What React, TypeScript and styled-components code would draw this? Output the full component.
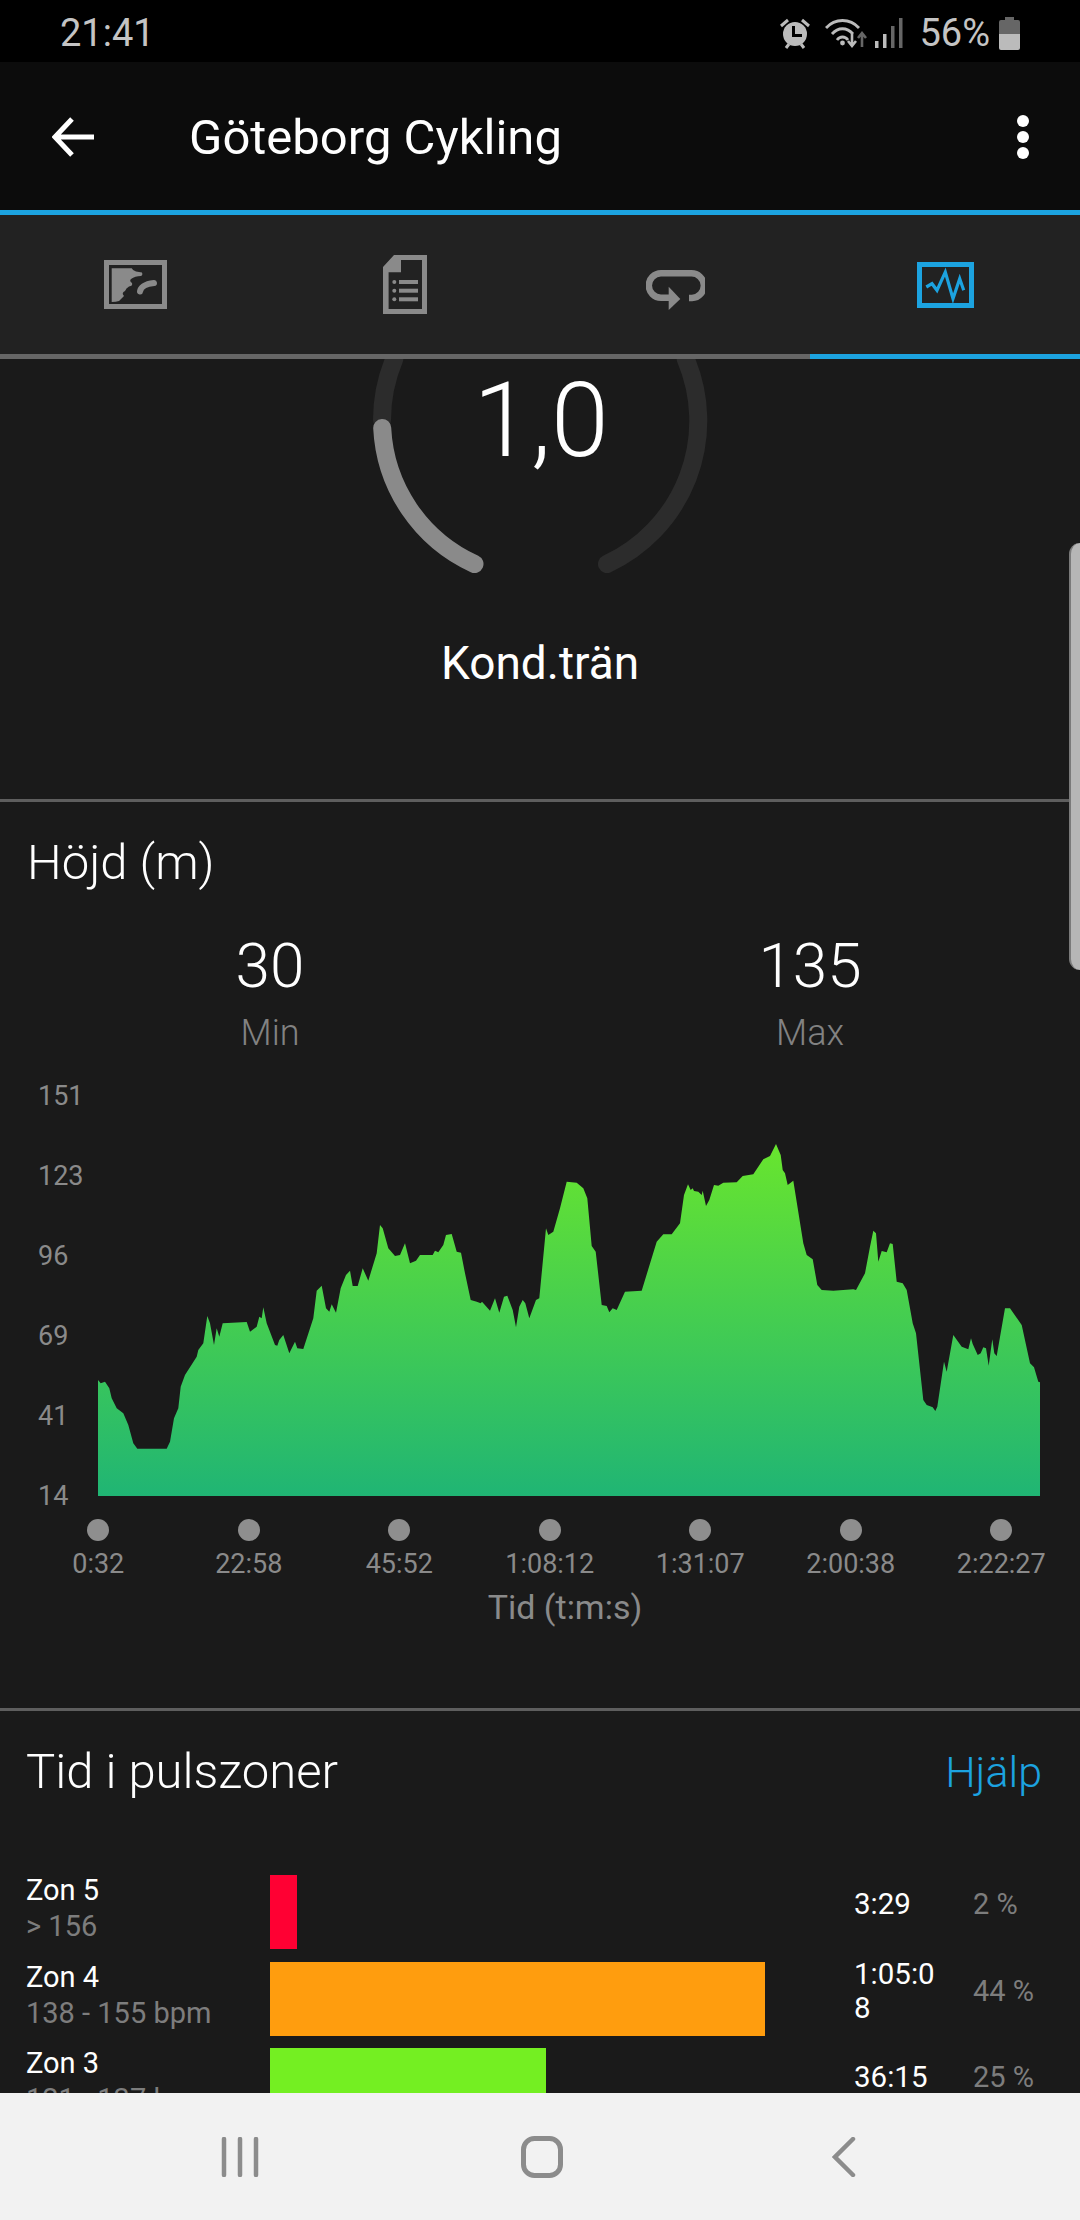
import styled, { createGlobalStyle } from "styled-components";

const GlobalStyle = createGlobalStyle`
  html, body {
    margin: 0;
    padding: 0;
    background: #000;
  }
  * {
    box-sizing: border-box;
  }
`;

const Screen = styled.div`
  position: relative;
  width: 1080px;
  height: 2220px;
  display: flex;
  flex-direction: column;
  overflow: hidden;
  background: #1a1a1a;
  color: #fff;
  font-family: Roboto, "Liberation Sans", sans-serif;
`;

const StatusBar = styled.div`
  flex: 0 0 62px;
  display: flex;
  align-items: center;
  justify-content: space-between;
  padding: 4px 60px 0;
  background: #000;
  color: #c4c4c4;
  font-size: 38px;
`;

const StatusIcons = styled.div`
  display: flex;
  align-items: center;
`;

const StatusPercent = styled.span`
  margin: 0 9px 0 16px;
  font-size: 38px;
`;

const Header = styled.header`
  flex: 0 0 153px;
  display: flex;
  align-items: center;
  padding: 2px 51px 0 52px;
  background: #0c0c0c;
  border-bottom: 5px solid #1ca3e0;
`;

const HeaderTitle = styled.h1`
  flex: 1;
  margin: 0 0 0 95px;
  font-size: 49px;
  font-weight: 400;
`;

const Tabs = styled.nav`
  flex: 0 0 144px;
  display: grid;
  grid-template-columns: repeat(4, 1fr);
  background: #222;
`;

const Tab = styled.div<{ $active?: boolean }>`
  display: flex;
  align-items: center;
  justify-content: center;
  border-bottom: 5px solid ${(p) => (p.$active ? "#1ca3e0" : "#666")};
`;

const Content = styled.main`
  flex: 1;
  min-height: 0;
  overflow: hidden;
`;

const Section = styled.section`
  border-bottom: 3px solid #5e5e5e;
`;

const GaugeSection = styled(Section)`
  height: 443px;
  display: flex;
  flex-direction: column;
  align-items: center;
`;

const Dial = styled.div`
  position: relative;
  width: 360px;
  height: 230px;
`;

const DialValue = styled.div`
  position: absolute;
  left: 2px;
  right: 0;
  top: 0;
  text-align: center;
  font-size: 104px;
  line-height: 124px;
  font-weight: 300;
`;

const GaugeLabel = styled.div`
  margin-top: 44px;
  font-size: 46px;
  line-height: 60px;
`;

const ElevationSection = styled(Section)`
  padding-top: 31px;
  padding-bottom: 79px;
`;

const SectionTitle = styled.h2`
  margin: 0;
  font-size: 49px;
  line-height: 60px;
  font-weight: 300;
`;

const ElevationTitle = styled(SectionTitle)`
  padding-left: 27px;
`;

const Stats = styled.div`
  display: grid;
  grid-template-columns: 1fr 1fr;
  margin-top: 37px;
  text-align: center;
`;

const StatValue = styled.div`
  font-size: 62px;
  line-height: 72px;
  font-weight: 300;
`;

const StatLabel = styled.div`
  margin-top: 9px;
  color: #828282;
  font-size: 36px;
  line-height: 44px;
  font-weight: 300;
`;

const ChartRow = styled.div`
  display: flex;
  align-items: flex-end;
  height: 432px;
  margin-top: 25px;
`;

const YAxis = styled.div`
  width: 98px;
  height: 100%;
  display: flex;
  flex-direction: column;
  justify-content: space-between;
  padding-left: 38px;
  color: #8a8a8a;
  font-size: 27px;
  line-height: 32px;
`;

const AreaChart = styled.svg`
  display: block;
  margin-bottom: 16px;
`;

const XAxis = styled.div`
  display: grid;
  grid-template-columns: repeat(7, 150.5px);
  margin: 7px 0 0 23px;
`;

const Tick = styled.div`
  display: flex;
  flex-direction: column;
  align-items: center;
  gap: 7px;
  color: #8a8a8a;
  font-size: 27px;
  line-height: 32px;
  white-space: nowrap;
`;

const TickDot = styled.span`
  width: 22px;
  height: 22px;
  border-radius: 50%;
  background: #8e8e8e;
`;

const AxisTitle = styled.div`
  margin-top: 5px;
  padding-left: 50px;
  color: #8a8a8a;
  font-size: 34px;
  line-height: 44px;
  text-align: center;
`;

const ZonesHead = styled.div`
  display: flex;
  align-items: center;
  justify-content: space-between;
  padding: 31px 38px 0 26px;
`;

const HelpLink = styled.span`
  color: #1ca3e0;
  font-size: 43px;
  font-weight: 300;
`;

const ZoneList = styled.div`
  display: flex;
  flex-direction: column;
  gap: 12.5px;
  margin-top: 73px;
  padding-left: 26px;
`;

const ZoneRow = styled.div`
  display: grid;
  grid-template-columns: 244px 584px 119px 1fr;
  grid-template-rows: 74px;
  align-items: center;
  height: 74px;
`;

const ZoneLabel = styled.div`
  padding-bottom: 8px;
`;

const ZoneName = styled.div`
  font-size: 29px;
  line-height: 36px;
`;

const ZoneRange = styled.div`
  color: #7d7d7d;
  font-size: 29px;
  line-height: 36px;
  white-space: nowrap;
`;

const ZoneBar = styled.div<{ $width: number; $color: string }>`
  width: ${(p) => p.$width}px;
  height: 74px;
  background: ${(p) => p.$color};
`;

const ZoneTime = styled.div`
  width: 84px;
  padding-bottom: 16px;
  font-size: 29.5px;
  line-height: 34px;
  word-break: break-all;
`;

const ZonePercent = styled.div`
  padding-bottom: 16px;
  color: #7d7d7d;
  font-size: 29px;
`;

const BottomNav = styled.nav`
  flex: 0 0 127px;
  display: grid;
  grid-template-columns: repeat(3, 302px);
  justify-content: center;
  align-items: center;
  padding-left: 4px;
  background: #f2f2f2;
`;

const NavButton = styled.div`
  display: flex;
  justify-content: center;
`;

const ScrollThumb = styled.div`
  position: absolute;
  right: 0;
  top: 543px;
  width: 11px;
  height: 427px;
  border-radius: 11px 0 0 11px;
  border-left: 2px solid #7a7a7a;
  background: #b6b6b6;
`;

// profile traced off the chart, in px relative to each half of the plot
const leftHalf = [
  114,780, 122,790, 135,785, 148,805, 155,835, 170,865, 190,880, 205,915, 220,970, 232,986,
  320,986, 330,965, 342,895, 355,865, 362,800, 375,765, 410,710, 415,690, 430,670, 442,588,
  450,610, 462,675, 470,625, 478,650, 488,610, 560,606, 570,635, 590,620, 598,590, 605,595,
  610,562, 620,610, 645,675, 652,677, 658,660, 670,645, 688,700, 705,665, 712,685, 730,687,
  760,595, 770,512, 785,497, 798,565, 808,575, 815,553, 828,578, 842,505, 858,465, 870,452,
  878,498, 893,498, 908,445, 925,482, 950,400, 960,315, 968,325, 985,385, 1005,408, 1020,405,
  1035,370, 1050,430, 1068,422, 1080,405, 1118,405, 1125,392, 1135,397, 1150,375, 1158,345,
  1175,342, 1190,395, 1203,398, 1215,460, 1232,540, 1250,545, 1262,550, 1266,545, 1290,572,
  1305,535, 1318,578, 1332,530, 1342,527, 1358,570, 1368,622, 1378,560, 1388,540, 1396,550,
  1408,595, 1428,540, 1438,535, 1458,325, 1465,345, 1480,335,
];

const rightHalf = [
  0,265, 20,185, 50,188, 70,205, 82,235, 95,378, 107,395, 125,555, 140,558, 148,577, 158,565,
  170,570, 195,515, 245,512, 290,365, 310,343, 335,343, 360,310, 372,225, 384,193, 392,210,
  398,205, 402,213, 415,215, 425,225, 428,212, 438,258, 448,240, 462,195, 475,197, 490,188,
  530,187, 548,168, 580,163, 610,118, 630,108, 648,72, 662,105, 668,150, 675,160, 683,195,
  700,182, 730,370, 740,405, 758,418, 772,495, 785,510, 820,512, 880,508, 888,510, 915,460,
  930,380, 940,332, 948,340, 955,425, 965,393, 980,397, 990,370, 998,372, 1010,485, 1028,490,
  1040,510, 1058,610, 1068,640, 1090,840, 1100,855, 1118,862, 1126,873, 1132,860, 1152,725,
  1160,755, 1180,645, 1205,680, 1225,688, 1233,655, 1238,672, 1253,705, 1262,700, 1270,682,
  1278,685, 1286,737, 1297,658, 1303,700, 1310,708, 1335,565, 1350,565, 1385,615, 1410,730,
  1422,742, 1435,785, 1440,787,
];

function toPoints(values: number[], originX: number) {
  const out: string[] = [];
  for (let i = 0; i < values.length; i += 2) {
    out.push(`${(originX + values[i] / 3).toFixed(1)} ${(1120 + values[i + 1] / 3).toFixed(1)}`);
  }
  return out;
}

const elevationPath = `M98 1496 L${[...toPoints(leftHalf, 60), ...toPoints(rightHalf, 560)].join(" L")} L1040 1496Z`;

const yLabels = ["151", "123", "96", "69", "41", "14"];
const xLabels = ["0:32", "22:58", "45:52", "1:08:12", "1:31:07", "2:00:38", "2:22:27"];

const zones = [
  { name: "Zon 5", range: "> 156", width: 27, color: "#ff0033", time: "3:29", percent: "2 %" },
  { name: "Zon 4", range: "138 - 155 bpm", width: 495, color: "#ff9d0e", time: "1:05:08", percent: "44 %" },
  { name: "Zon 3", range: "121 - 137 bpm", width: 276, color: "#74ef22", time: "36:15", percent: "25 %" },
];

function AlarmIcon() {
  return (
    <svg width="32" height="32" viewBox="0 0 32 32">
      <path d="M2 9 9 3M30 9 23 3M7 31l3-4M25 31l-3-4" stroke="#bbb" strokeWidth="3" fill="none" />
      <circle cx="16" cy="17" r="12" fill="#bbb" />
      <path d="M14.5 9v9.5H23" stroke="#000" strokeWidth="3" fill="none" />
    </svg>
  );
}

function WifiIcon() {
  return (
    <svg width="50" height="32" viewBox="0 0 50 32" style={{ marginLeft: 14 }}>
      <g fill="none" stroke="#bbb" strokeWidth="2.8">
        <path d="M1 11C10 1 25 1 34 11" />
        <path d="M7 17C13 10 22 10 28 17" />
        <path d="M12 23C15 19 20 19 23 23" />
      </g>
      <circle cx="17.5" cy="26" r="2.4" fill="#bbb" />
      <path d="M27 17v10M23 24l4 5 4-5" stroke="#bbb" strokeWidth="2.6" fill="none" />
      <path d="M37 30V18M33 21l4-5 4 5" stroke="#666" strokeWidth="2.6" fill="none" />
    </svg>
  );
}

function SignalIcon() {
  return (
    <svg width="28" height="32" viewBox="0 0 28 32">
      <rect x="0" y="24" width="3.5" height="7" fill="#bbb" />
      <rect x="8" y="17" width="3.5" height="14" fill="#bbb" />
      <rect x="16" y="9" width="3.5" height="22" fill="#666" />
      <rect x="24" y="1" width="3.5" height="30" fill="#666" />
    </svg>
  );
}

function BatteryIcon() {
  return (
    <svg width="21" height="33" viewBox="0 0 21 33">
      <path d="M6 0h9v3h4a2 2 0 0 1 2 2v12H0V5a2 2 0 0 1 2-2h4Z" fill="#666" />
      <path d="M0 17h21v14a2 2 0 0 1-2 2H2a2 2 0 0 1-2-2Z" fill="#bbb" />
    </svg>
  );
}

function BackArrow() {
  return (
    <svg width="42" height="40" viewBox="0 0 42 40">
      <path d="M42 20H4M20 2 3 20l17 18" stroke="#fff" strokeWidth="5" fill="none" />
    </svg>
  );
}

function MoreDots() {
  return (
    <svg width="12" height="44" viewBox="0 0 12 44">
      <circle cx="6" cy="6" r="6" fill="#fff" />
      <circle cx="6" cy="22" r="6" fill="#fff" />
      <circle cx="6" cy="38" r="6" fill="#fff" />
    </svg>
  );
}

function MapIcon() {
  return (
    <svg width="63" height="49" viewBox="0 0 63 49">
      <rect x="2.5" y="2.5" width="58" height="44" fill="none" stroke="#8a8a8a" strokeWidth="5" />
      <path
        d="M7.7 8.300H27.700Q29 11 32 11.500L38 12.500Q39 15 37 16Q31 16 27 19Q25 21 28 23Q29 26 25 26.500Q22 28 21 31Q17 33 20 36L15 41Q12 42 7.700 42Z"
        fill="#8a8a8a"
      />
      <path d="M36 31.500Q37 24.500 50 23" stroke="#8a8a8a" strokeWidth="6" strokeLinecap="round" fill="none" />
    </svg>
  );
}

function DocIcon() {
  return (
    <svg width="44" height="59" viewBox="0 0 44 59">
      <path
        fillRule="evenodd"
        fill="#8a8a8a"
        d="M0 12 11 0H44V59H0ZM18 5V17.3H5.6V54H39V5Z"
      />
      <g fill="#8a8a8a">
        <circle cx="11.3" cy="27" r="2" />
        <circle cx="11.3" cy="35.7" r="2" />
        <circle cx="11.3" cy="44.3" r="2" />
        <rect x="16" y="25" width="19" height="4" />
        <rect x="16" y="33.7" width="19" height="4" />
        <rect x="16" y="42.3" width="19" height="4" />
      </g>
    </svg>
  );
}

function LapIcon() {
  return (
    <svg width="59" height="50" viewBox="0 -10 59 50">
      <path
        d="M43 28H46A12 12 0 0 0 45 3.300H15A12 12 0 0 0 15 27.700H25"
        fill="none"
        stroke="#8a8a8a"
        strokeWidth="6.500"
      />
      <path d="M22.700 16.700 34.300 29 22.700 40Z" fill="#8a8a8a" />
    </svg>
  );
}

function ChartIcon() {
  return (
    <svg width="57" height="46" viewBox="0 0 57 46">
      <rect x="2.500" y="2.500" width="52" height="41" fill="none" stroke="#1ca3e0" strokeWidth="5" />
      <path
        d="M9.300 25 15 21.700 20 28.300 28.300 10 36 36.700 42.700 16.700 46.700 28.300"
        fill="none"
        stroke="#1ca3e0"
        strokeWidth="3.200"
      />
    </svg>
  );
}

function GaugeDial() {
  return (
    <svg width="360" height="230" viewBox="360 359 360 230">
      <path
        d="M394.300 359A158 158 0 0 0 382 420M685.700 359A158 158 0 0 1 607 564"
        fill="none"
        stroke="#2c2c2c"
        strokeWidth="18"
        strokeLinecap="round"
      />
      <path
        d="M382.200 428A158 158 0 0 0 474.500 564"
        fill="none"
        stroke="#8a8a8a"
        strokeWidth="18"
        strokeLinecap="round"
      />
    </svg>
  );
}

export default function App() {
  return (
    <Screen>
      <GlobalStyle />
      <StatusBar>
        <span>21:41</span>
        <StatusIcons>
          <AlarmIcon />
          <WifiIcon />
          <SignalIcon />
          <StatusPercent>56%</StatusPercent>
          <BatteryIcon />
        </StatusIcons>
      </StatusBar>
      <Header>
        <BackArrow />
        <HeaderTitle>Göteborg Cykling</HeaderTitle>
        <MoreDots />
      </Header>
      <Tabs>
        <Tab><MapIcon /></Tab>
        <Tab><DocIcon /></Tab>
        <Tab><LapIcon /></Tab>
        <Tab $active><ChartIcon /></Tab>
      </Tabs>
      <Content>
        <GaugeSection>
          <Dial>
            <GaugeDial />
            <DialValue>1,0</DialValue>
          </Dial>
          <GaugeLabel>Kond.trän</GaugeLabel>
        </GaugeSection>
        <ElevationSection>
          <ElevationTitle>Höjd (m)</ElevationTitle>
          <Stats>
            <div>
              <StatValue>30</StatValue>
              <StatLabel>Min</StatLabel>
            </div>
            <div>
              <StatValue>135</StatValue>
              <StatLabel>Max</StatLabel>
            </div>
          </Stats>
          <ChartRow>
            <YAxis>
              {yLabels.map((label) => (
                <span key={label}>{label}</span>
              ))}
            </YAxis>
            <AreaChart width="942" height="366" viewBox="98 1130 942 366">
              <defs>
                <linearGradient id="elevation" gradientUnits="userSpaceOnUse" x1="0" y1="1144" x2="0" y2="1496">
                  <stop offset="0" stopColor="#68e52e" />
                  <stop offset="1" stopColor="#20b574" />
                </linearGradient>
              </defs>
              <path d={elevationPath} fill="url(#elevation)" />
            </AreaChart>
          </ChartRow>
          <XAxis>
            {xLabels.map((label) => (
              <Tick key={label}>
                <TickDot />
                {label}
              </Tick>
            ))}
          </XAxis>
          <AxisTitle>Tid (t:m:s)</AxisTitle>
        </ElevationSection>
        <ZonesHead>
          <SectionTitle>Tid i pulszoner</SectionTitle>
          <HelpLink>Hjälp</HelpLink>
        </ZonesHead>
        <ZoneList>
          {zones.map((zone) => (
            <ZoneRow key={zone.name}>
              <ZoneLabel>
                <ZoneName>{zone.name}</ZoneName>
                <ZoneRange>{zone.range}</ZoneRange>
              </ZoneLabel>
              <ZoneBar $width={zone.width} $color={zone.color} />
              <ZoneTime>{zone.time}</ZoneTime>
              <ZonePercent>{zone.percent}</ZonePercent>
            </ZoneRow>
          ))}
        </ZoneList>
      </Content>
      <BottomNav>
        <NavButton>
          <svg width="38" height="40" viewBox="0 0 38 40">
            <path d="M3 2V38M19 2V38M35 2V38" stroke="#8c8c8c" strokeWidth="4.500" strokeLinecap="round" />
          </svg>
        </NavButton>
        <NavButton>
          <svg width="42" height="42" viewBox="0 0 42 42">
            <rect x="2.500" y="2.500" width="37" height="37" rx="11" fill="none" stroke="#8c8c8c" strokeWidth="5" />
          </svg>
        </NavButton>
        <NavButton>
          <svg width="24" height="40" viewBox="0 0 24 40">
            <path d="M21 2 3 20l18 18" fill="none" stroke="#8c8c8c" strokeWidth="4.500" strokeLinecap="round" />
          </svg>
        </NavButton>
      </BottomNav>
      <ScrollThumb />
    </Screen>
  );
}
